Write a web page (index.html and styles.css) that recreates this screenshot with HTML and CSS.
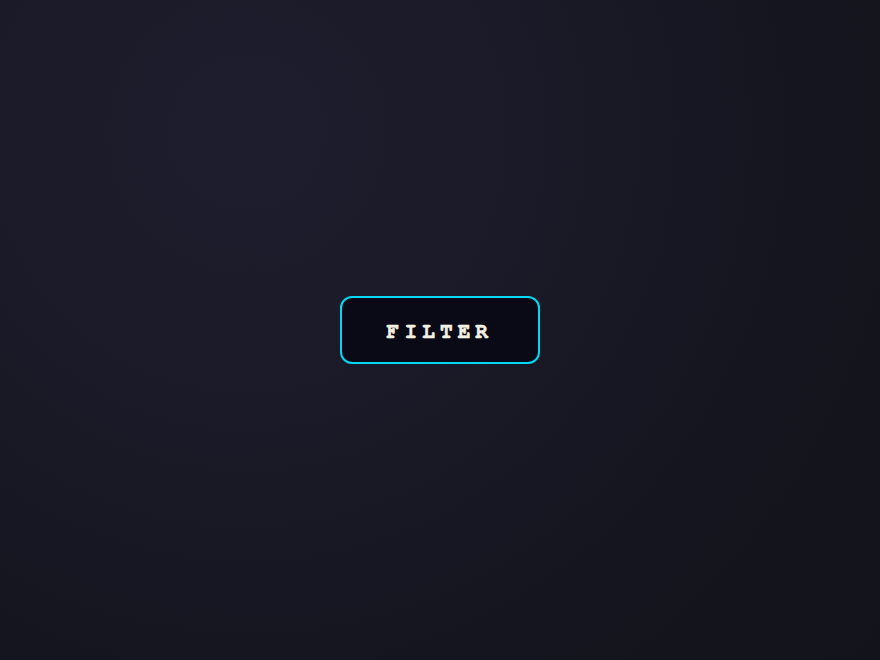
FILE: index.html
```html
<!DOCTYPE html>
<html lang="en">
<head>
<meta charset="utf-8">
<title>Filter</title>
<link rel="stylesheet" href="styles.css">
</head>
<body>
<main class="stage">
  <button class="filter-btn" type="button">Filter</button>
</main>
</body>
</html>
```
FILE: styles.css
```css
html, body {
  margin: 0;
  padding: 0;
  height: 100%;
}
body {
  background: radial-gradient(circle at 28% 20%, #1d1d2d 0%, #1a1a28 35%, #15151f 70%, #13131b 100%);
}
.stage {
  height: 100vh;
  display: grid;
  place-items: center;
}
.filter-btn {
  box-sizing: border-box;
  width: 200px;
  height: 68px;
  background: #0a0a17;
  border: 2px solid #00d8f4;
  border-radius: 12px;
  color: #f5f1e2;
  font-family: "FreeMono", "Liberation Mono", monospace;
  font-weight: 700;
  font-size: 21px;
  letter-spacing: 5.2px;
  -webkit-text-stroke: 0.6px #f5f1e2;
  text-transform: uppercase;
  padding: 2px 0 0 0;
  cursor: pointer;
}
```
